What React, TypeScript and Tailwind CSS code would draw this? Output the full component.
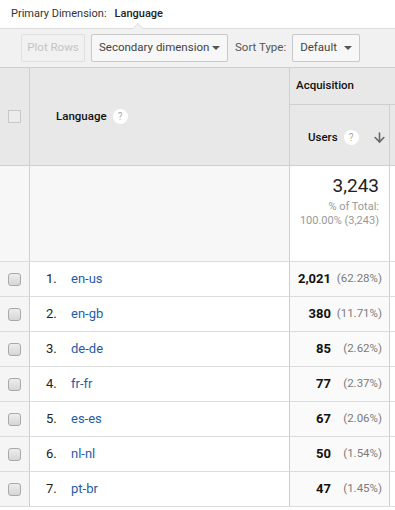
import { ArrowDown } from "lucide-react";

const rows = [
  { n: 1, lang: "en-us", users: "2,021", pct: "(62.28%)" },
  { n: 2, lang: "en-gb", users: "380", pct: "(11.71%)" },
  { n: 3, lang: "de-de", users: "85", pct: "(2.62%)" },
  { n: 4, lang: "fr-fr", users: "77", pct: "(2.37%)" },
  { n: 5, lang: "es-es", users: "67", pct: "(2.06%)" },
  { n: 6, lang: "nl-nl", users: "50", pct: "(1.54%)" },
  { n: 7, lang: "pt-br", users: "47", pct: "(1.45%)" },
];

function Help() {
  return (
    <span className="inline-flex items-center justify-center w-[15px] h-[15px] rounded-full bg-white text-[10px] text-[#aaa] leading-none">
      ?
    </span>
  );
}

function Caret() {
  return (
    <svg width="8" height="4" viewBox="0 0 8 4" className="ml-auto shrink-0">
      <path d="M0 0h8L4 4z" fill="#555" />
    </svg>
  );
}

function Checkbox({ flat }: { flat?: boolean }) {
  if (flat) {
    return <div className="w-[13px] h-[13px] border border-[#c8c8c8] bg-[#ececec]" />;
  }
  return (
    <div className="w-[13px] h-[13px] rounded-[3px] border border-[#a9a9a9] bg-gradient-to-b from-[#ededed] to-[#d6d6d6]" />
  );
}

export default function App() {
  return (
    <div className="w-[395px] h-[510px] overflow-hidden bg-white text-[#333] font-['Roboto',sans-serif] text-[13px]">
      <div className="relative h-[29px] flex items-center pl-[11px] border-b border-[#dcdcdc] text-[11px]">
        <span>Primary Dimension:</span>
        <span className="ml-[8px] font-medium text-[#222]">Language</span>
        <div className="absolute left-[132px] bottom-[-1px] w-0 h-0 border-x-[6px] border-x-transparent border-b-[6px] border-b-[#dcdcdc]" />
        <div className="absolute left-[133px] bottom-[-1px] w-0 h-0 border-x-[5px] border-x-transparent border-b-[5px] border-b-[#f1f1f1]" />
      </div>
      <div className="h-[38px] bg-[#f1f1f1] flex items-center pl-[21px] gap-[6px] whitespace-nowrap text-[11.5px]">
        <div className="h-[28px] w-[64px] flex items-center justify-center rounded-[2px] border border-[#e0e0e0] text-[#c4c4c4]">
          Plot Rows
        </div>
        <div className="h-[28px] w-[137px] flex items-center px-[7px] rounded-[2px] border border-[#c9c9c9] bg-[#f7f7f7] text-[#444]">
          Secondary dimension
          <Caret />
        </div>
        <span className="ml-[1px] text-[#555]">Sort Type:</span>
        <div className="h-[28px] w-[68px] flex items-center px-[7px] rounded-[2px] border border-[#c9c9c9] bg-[#f7f7f7] text-[#444]">
          Default
          <Caret />
        </div>
      </div>

      {/* header */}
      <div className="flex h-[99px] bg-[#e8e8e8] border-y border-[#cfcfcf] text-[11.5px]">
        <div className="w-[30px] border-r border-[#cfcfcf] flex items-center justify-center">
          <Checkbox flat />
        </div>
        <div className="w-[260px] border-r border-[#cfcfcf] flex items-center pl-[26px] gap-[6px]">
          <span className="font-medium text-[#111]">Language</span>
          <Help />
        </div>
        <div className="flex-1 flex flex-col">
          <div className="h-[37px] border-b border-[#cfcfcf] flex items-center pl-[6px] font-medium text-[#111]">
            Acquisition
          </div>
          <div className="flex-1 flex">
            <div className="w-[100px] border-r border-[#cfcfcf] flex items-center pl-[18px] pt-[5px]">
              <span className="font-medium text-[#111]">Users</span>
              <span className="ml-[6px]">
                <Help />
              </span>
              <ArrowDown size={15} strokeWidth={2.5} className="ml-auto mr-[2px] text-[#666]" />
            </div>
            <div className="flex-1" />
          </div>
        </div>
      </div>

      {/* totals */}
      <div className="flex h-[96px] border-b border-[#dcdcdc]">
        <div className="w-[30px] border-r border-[#cfcfcf] bg-[#f7f7f7]" />
        <div className="w-[260px] border-r border-[#cfcfcf] bg-[#f7f7f7]" />
        <div className="w-[100px] border-r border-[#cfcfcf] flex flex-col items-end pr-[10px] pt-[9px] leading-[14px] text-[11px]">
          <span className="text-[19px] leading-[22px] text-[#222]">3,243</span>
          <span className="mt-[3px] text-[#999]">% of Total:</span>
          <span className="text-[#999]">100.00% (3,243)</span>
        </div>
        <div className="flex-1" />
      </div>

      {rows.map((r) => (
        <div key={r.n} className="flex h-[35px] border-b border-[#dcdcdc]">
          <div className="w-[30px] border-r border-[#cfcfcf] bg-[#f5f5f5] flex items-center justify-center">
            <Checkbox />
          </div>
          <div className="w-[260px] border-r border-[#cfcfcf] flex items-center">
            <span className="w-[25px] ml-[16px] text-[#222]">{r.n}.</span>
            <span className="text-[#1f5ca8]">{r.lang}</span>
          </div>
          <div className="w-[100px] border-r border-[#cfcfcf] bg-[#fafafa] flex items-center">
            <span className="w-[41px] text-right font-bold text-[#111]">{r.users}</span>
            <span className="w-[51px] text-right text-[11.5px] text-[#7a7a7a]">{r.pct}</span>
          </div>
          <div className="flex-1" />
        </div>
      ))}
    </div>
  );
}
